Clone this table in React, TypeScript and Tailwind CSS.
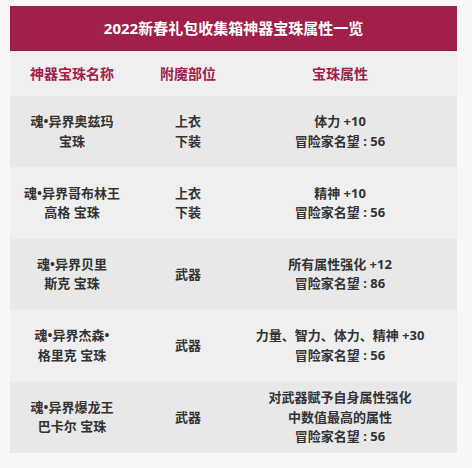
const rows = [
  { name: ["魂•异界奥兹玛", "宝珠"], part: ["上衣", "下装"], attr: ["体力 +10", "冒险家名望 : 56"] },
  { name: ["魂•异界哥布林王", "高格 宝珠"], part: ["上衣", "下装"], attr: ["精神 +10", "冒险家名望 : 56"] },
  { name: ["魂•异界贝里", "斯克 宝珠"], part: ["武器"], attr: ["所有属性强化 +12", "冒险家名望 : 86"] },
  { name: ["魂•异界杰森•", "格里克 宝珠"], part: ["武器"], attr: ["力量、智力、体力、精神 +30", "冒险家名望 : 56"] },
  {
    name: ["魂•异界爆龙王", "巴卡尔 宝珠"],
    part: ["武器"],
    attr: ["对武器赋予自身属性强化", "中数值最高的属性", "冒险家名望 : 56"],
  },
];

function Lines({ items }: { items: string[] }) {
  return (
    <div className="flex flex-col items-center justify-center text-center">
      {items.map((t) => (
        <span key={t} className="whitespace-nowrap">
          {t}
        </span>
      ))}
    </div>
  );
}

export default function App() {
  return (
    <div
      className="h-[468px] w-[472px] bg-[#f7f7f7] pt-[6px] pl-[10px]"
      style={{ fontFamily: '"Noto Sans", "Noto Sans CJK SC", sans-serif' }}
    >
      <div className="w-[447px]">
        <div className="flex h-[45px] items-center justify-center border-b border-[#8c1a3f] bg-[#a12049] text-[15px] font-bold text-white">
          2022新春礼包收集箱神器宝珠属性一览
        </div>
        <div className="grid h-[45px] grid-cols-[124px_108px_1fr] items-center bg-[#efefef] text-[14px] font-bold text-[#a12049]">
          <div className="text-center">神器宝珠名称</div>
          <div className="text-center">附魔部位</div>
          <div className="pr-[19px] text-center">宝珠属性</div>
        </div>
        {rows.map((r, i) => (
          <div
            key={i}
            className={`grid h-[71.4px] grid-cols-[124px_108px_1fr] items-center text-[13px] leading-[19.5px] font-bold text-[#333] ${
              i % 2 === 0 ? "bg-[#e8e8e8]" : "bg-[#efefef]"
            }`}
          >
            <Lines items={r.name} />
            <Lines items={r.part} />
            <div className="pr-[19px]">
              <Lines items={r.attr} />
            </div>
          </div>
        ))}
      </div>
    </div>
  );
}
